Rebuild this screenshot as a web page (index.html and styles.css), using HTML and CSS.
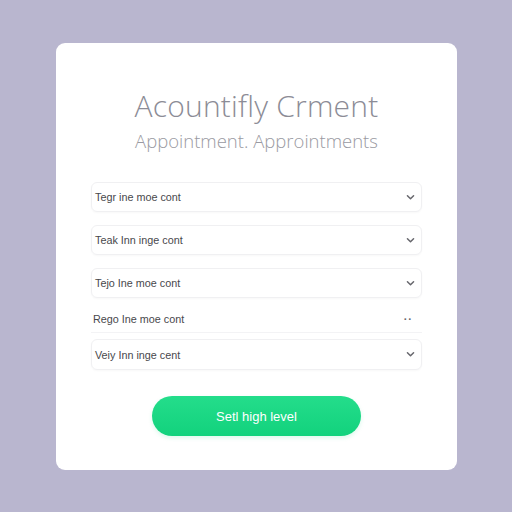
FILE: index.html
```html
<!DOCTYPE html>
<html>
<head>
<meta charset="utf-8">
<link rel="stylesheet" href="styles.css">
</head>
<body>
<div class="card">
  <h1 class="title">Acountifly Crment</h1>
  <p class="subtitle">Appointment. Approintments</p>
  <div class="list">
    <div class="row boxed"><span>Tegr ine moe cont</span><svg class="chev" viewBox="0 0 10 8"><path d="M1.5 2 L5 5.5 L8.5 2"/></svg></div>
    <div class="row boxed"><span>Teak Inn inge cont</span><svg class="chev" viewBox="0 0 10 8"><path d="M1.5 2 L5 5.5 L8.5 2"/></svg></div>
    <div class="row boxed"><span>Tejo Ine moe cont</span><svg class="chev" viewBox="0 0 10 8"><path d="M1.5 2 L5 5.5 L8.5 2"/></svg></div>
    <div class="row plain"><span>Rego Ine moe cont</span><span class="dots">··</span></div>
    <div class="row boxed tall"><span>Veiy Inn inge cent</span><svg class="chev" viewBox="0 0 10 8"><path d="M1.5 2 L5 5.5 L8.5 2"/></svg></div>
  </div>
  <button class="cta">Setl high level</button>
</div>
</body>
</html>
```
FILE: styles.css
```css
html, body {
  margin: 0;
  padding: 0;
}
body {
  background: #b9b6cf;
  width: 512px;
  height: 512px;
  overflow: hidden;
  font-family: "Open Sans", "Liberation Sans", sans-serif;
}
.card {
  margin: 43px 0 0 56px;
  width: 401px;
  height: 427px;
  background: #ffffff;
  border-radius: 9px;
  box-sizing: border-box;
  display: flex;
  flex-direction: column;
  align-items: center;
  padding-top: 44px;
}
.title {
  margin: 0;
  font-size: 30px;
  font-weight: 300;
  color: #8c8c96;
  line-height: 38px;
  letter-spacing: 0.2px;
}
.subtitle {
  margin: 0;
  margin-top: 3px;
  font-size: 18.5px;
  font-weight: 300;
  color: #9a9aa2;
  line-height: 25px;
}
.list {
  margin-top: 29px;
  width: 331px;
  display: flex;
  flex-direction: column;
  gap: 13px;
}
.row {
  height: 30px;
  box-sizing: border-box;
  display: flex;
  align-items: center;
  justify-content: space-between;
  padding: 0 6px 0 3px;
  font-family: "Liberation Sans", Arial, sans-serif;
  font-size: 10.8px;
  color: #48484c;
}
.boxed {
  border: 1px solid #f0f0f2;
  border-radius: 6px;
  box-shadow: 0 1px 2px rgba(0,0,0,0.03);
}
.tall {
  height: 31px;
}
.plain {
  height: 28px;
  margin-top: -6px;
  margin-bottom: -7px;
  padding-left: 2px;
  border-bottom: 1px solid #f3f3f5;
}
.chev {
  width: 9px;
  height: 7px;
  fill: none;
  stroke: #66666c;
  stroke-width: 1.7;
  stroke-linecap: round;
  stroke-linejoin: round;
}
.dots {
  color: #66666c;
  font-size: 11px;
  font-weight: bold;
  letter-spacing: 1px;
  padding-right: 3px;
}
.cta {
  margin-top: 26px;
  width: 209px;
  height: 40px;
  border: none;
  border-radius: 20px;
  background: linear-gradient(180deg, #24dd8b, #12d27d);
  color: #ffffff;
  font-family: "Liberation Sans", Arial, sans-serif;
  font-size: 13px;
  box-shadow: 0 2px 4px rgba(18,210,125,0.15);
}
```
